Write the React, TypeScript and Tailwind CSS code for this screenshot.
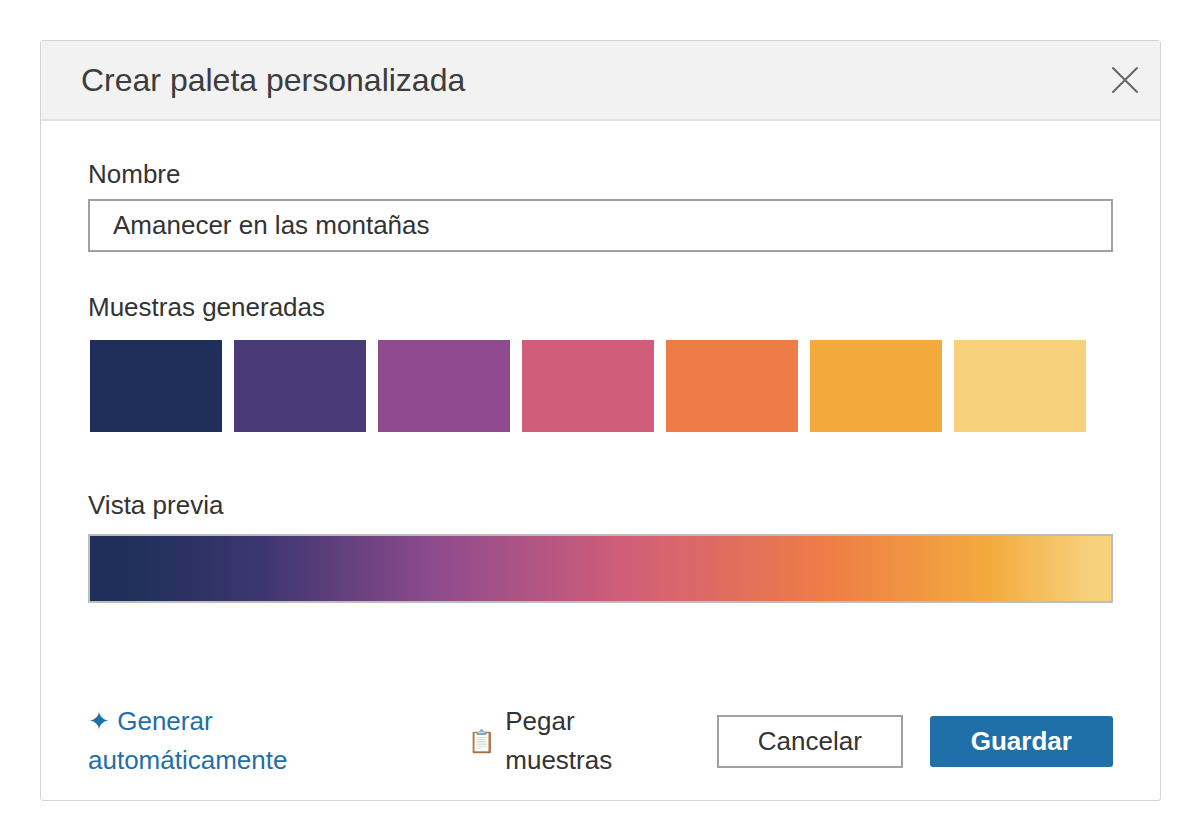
import React from "react";

const colors = ["#1f2f5a", "#4a3a75", "#8f4b8d", "#d05d79", "#ee7c46", "#f3aa3d", "#f7d17c"];

export default function App() {
  return (
    <div className="w-[1200px] h-[840px] bg-white pt-[40px] pl-[40px]" style={{ fontFamily: '"Liberation Sans", Arial, sans-serif' }}>
      <div className="w-[1121px] h-[761px] border border-[#d4d4d4] rounded-[3px] flex flex-col bg-white">
        <div className="h-[80px] bg-[#f2f2f2] border-b-2 border-[#e2e2e2] flex items-center justify-between pl-[40px] pr-[20px]">
          <div className="text-[32px] text-[#3c3c3c]">Crear paleta personalizada</div>
          <svg width="30" height="30" viewBox="0 0 30 30" stroke="#666" strokeWidth="2" strokeLinecap="round">
            <path d="M3 3 L27 27 M27 3 L3 27" />
          </svg>
        </div>
        <div className="flex-1 flex flex-col px-[47px]">
          <div className="text-[26px] text-[#333] mt-[38px] leading-[30px]">Nombre</div>
          <div className="mt-[10px] h-[53px] border-2 border-[#a0a0a0] flex items-center px-[23px] text-[26px] text-[#333]">Amanecer en las montañas</div>
          <div className="text-[26px] text-[#333] mt-[40px] leading-[30px]">Muestras generadas</div>
          <div className="mt-[18px] flex gap-[12px] pl-[2px]">
            {colors.map((c) => (
              <div key={c} className="w-[132px] h-[92px]" style={{ background: c }} />
            ))}
          </div>
          <div className="text-[26px] text-[#333] mt-[58px] leading-[30px]">Vista previa</div>
          <div
            className="mt-[14px] h-[69px] border-2 border-[#bdbdbd]"
            style={{ background: `linear-gradient(to right, #1f2f5a 4%, #3d3670 17%, #8f4b8d 34%, #d05d79 52%, #ee7c46 72%, #f3aa3d 88%, #f7d17c 98%)` }}
          />
          <div className="mt-auto mb-[20px] flex items-center">
            <div className="text-[26px] text-[#1f6fa8]">✦ Generar automáticamente</div>
            <div className="ml-[50px] flex items-center gap-[10px] text-[26px] text-[#333]">
              <span className="text-[22px]">📋</span>Pegar muestras
            </div>
            <button className="ml-[29px] w-[186px] h-[53px] border-2 border-[#a0a0a0] text-[26px] text-[#333] bg-white">Cancelar</button>
            <button className="ml-[27px] w-[184px] h-[51px] rounded-[3px] bg-[#1f6fa8] text-white font-bold text-[26px]">Guardar</button>
          </div>
        </div>
      </div>
    </div>
  );
}
